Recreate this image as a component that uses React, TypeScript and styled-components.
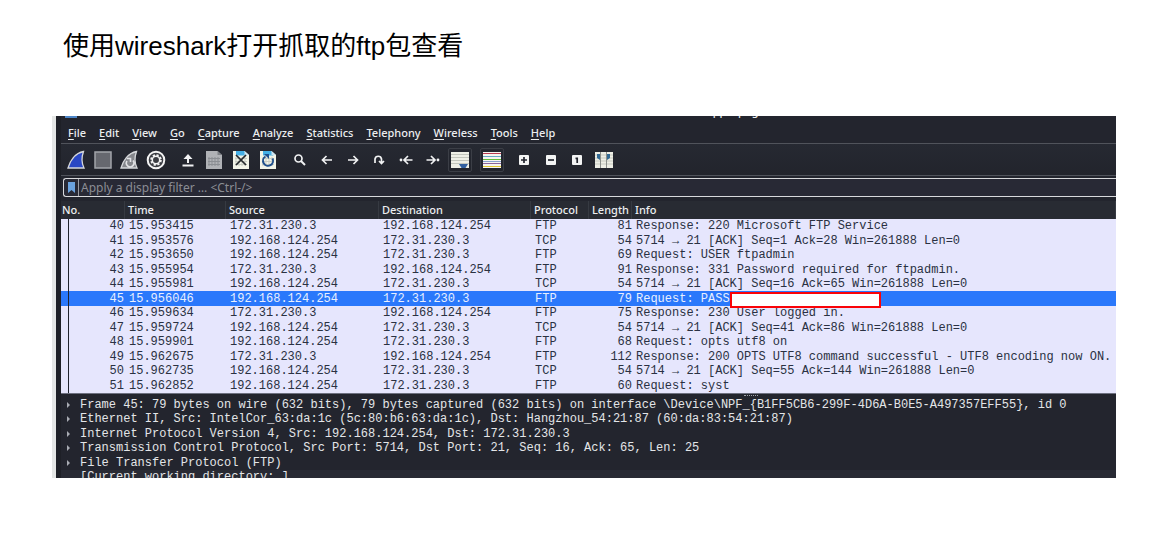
import React from 'react';
import styled, { createGlobalStyle, css } from 'styled-components';

const Global = createGlobalStyle`
  * { box-sizing: border-box; }
  body { margin: 0; background: #fff; }
`;

const ui = '"Noto Sans", "Liberation Sans", sans-serif';
const mono = '"Liberation Mono", monospace';

const Slide = styled.main`
  padding: 29px 51px 0 52px;
`;

const Title = styled.h1`
  margin: 0 0 53px 11px;
  font: 400 26px/34px "Liberation Sans", "Noto Sans CJK SC", sans-serif;
  color: #000;
`;

const Capture = styled.section`
  border-left: 4px solid #e4e6e5;
  overflow: hidden;
`;

const Window = styled.div`
  background: #23252e;
  border-left: 5px solid #1e2027;
  color: #eceef0;
  font: 500 11px/16px ${ui};
`;

const TitleBar = styled.div`
  position: relative;
  display: flex;
  height: 8px;
  overflow: hidden;
`;

const AppIcon = styled.span`
  width: 12px;
  height: 2px;
  margin-left: 4px;
  background: #4d86c8;
`;

const WindowName = styled.span`
  position: absolute;
  left: 61%;
  bottom: 5px;
  line-height: 16px;
`;

const MenuBar = styled.nav`
  display: flex;
  align-items: flex-start;
  gap: 13px;
  height: 19px;
  padding-left: 7px;
`;

const MenuButton = styled.button`
  padding: 0;
  border: 0;
  background: none;
  color: inherit;
  font: 500 11px/18px ${ui};
  white-space: nowrap;
  &::first-letter { text-decoration: underline; text-underline-offset: 2px; }
`;

const Toolbar = styled.div`
  display: flex;
  align-items: center;
  height: 33px;
  padding-left: 2px;
  border-top: 1px solid #50535b;
  border-bottom: 1px solid #50535b;
  background: linear-gradient(#262932, #22242c);
`;

const Tool = styled.button<{ $gap?: number; $framed?: boolean }>`
  display: grid;
  place-items: center;
  flex: none;
  width: ${p => (p.$framed ? 24 : 26)}px;
  height: 24px;
  margin: 0 0 0 ${p => p.$gap ?? 0}px;
  padding: 0;
  border: ${p => (p.$framed ? '1px solid #3b3e46' : '0')};
  border-radius: 2px;
  background: none;
  svg { display: block; }
`;

const FilterRow = styled.label`
  display: flex;
  height: 19px;
  margin: 2px 0 4px 2px;
  border: 1px solid #d8d9dc;
  border-right: 0;
  border-radius: 3px 0 0 3px;
  background: #282935;
`;

const Bookmark = styled.button`
  display: grid;
  place-items: center;
  width: 15px;
  padding: 0;
  border: 0;
  border-right: 1px solid #9a9ca3;
  background: none;
`;

const FilterInput = styled.input`
  flex: 1;
  min-width: 0;
  padding: 0 2px;
  border: 0;
  outline: 0;
  background: none;
  color: #eceef0;
  font: 400 12px/16px ${ui};
  &::placeholder { color: #8b8d94; opacity: 1; }
`;

const Packets = styled.table`
  width: 100%;
  table-layout: fixed;
  border-collapse: collapse;
  background: #e6e6fd;
  color: #2a3142;
  font: 400 12px/14px ${mono};
`;

const Head = styled.th<{ $w?: number }>`
  width: ${p => (p.$w ? `${p.$w}px` : 'auto')};
  height: 18px;
  padding: 0 0 0 3px;
  background: #282b33;
  box-shadow: inset -1px 0 #363a42;
  color: #eceef0;
  font: 500 11px/16px ${ui};
  text-align: left;
  vertical-align: middle;
  &:first-child { padding-left: 1px; }
`;

const Row = styled.tr<{ $selected?: boolean }>`
  height: 14px;
  &:nth-child(even) { height: 15px; }
  ${p => p.$selected && css`background: #2a78fb; color: #e8efff;`}
`;

const Cell = styled.td<{ $right?: boolean }>`
  padding: 0 0 0 4px;
  text-align: ${p => (p.$right ? 'right' : 'left')};
  white-space: pre;
  &:first-child {
    padding: 0 1px 0 0;
    background: linear-gradient(#1f232d, #1f232d) 7px 0 / 1px 100% no-repeat;
  }
`;

const InfoLine = styled.div`
  display: flex;
  height: 14px;
`;

const Redaction = styled.span`
  position: relative;
  flex: none;
  width: 151px;
  height: 16px;
  border: 2px solid #fa0308;
  background: #fff;
`;

const Splitter = styled.div`
  display: flex;
  justify-content: center;
  height: 4px;
  padding: 1px 0 0 325px;
  border-top: 1px solid #6d7080;
  &::after { content: ''; width: 14px; border-top: 1px dotted #a0a3ab; }
`;

const Details = styled.ul`
  height: 81px;
  margin: 0;
  padding: 0;
  overflow: hidden;
  list-style: none;
  color: #e3e5e8;
  font: 400 12px/14px ${mono};
`;

const Detail = styled.li`
  display: flex;
  align-items: center;
  height: 15px;
  padding-left: 6px;
  white-space: pre;
  &:nth-child(even) { height: 14px; }
  &:last-child { background: #282a34; }
`;

const Arrow = styled.span<{ $leaf?: boolean }>`
  width: 13px;
  visibility: ${p => (p.$leaf ? 'hidden' : 'visible')};
  &::before {
    content: '';
    display: block;
    width: 0;
    border: 3px solid transparent;
    border-left-color: #a9acb3;
    border-right: 0;
  }
`;

const menus = ['File', 'Edit', 'View', 'Go', 'Capture', 'Analyze', 'Statistics', 'Telephony', 'Wireless', 'Tools', 'Help'];

const a = '192.168.124.254';
const b = '172.31.230.3';
const packets: [number, string, boolean, string, number, string][] = [
  [40, '15.953415', false, 'FTP', 81, 'Response: 220 Microsoft FTP Service'],
  [41, '15.953576', true, 'TCP', 54, '5714 → 21 [ACK] Seq=1 Ack=28 Win=261888 Len=0'],
  [42, '15.953650', true, 'FTP', 69, 'Request: USER ftpadmin'],
  [43, '15.955954', false, 'FTP', 91, 'Response: 331 Password required for ftpadmin.'],
  [44, '15.955981', true, 'TCP', 54, '5714 → 21 [ACK] Seq=16 Ack=65 Win=261888 Len=0'],
  [45, '15.956046', true, 'FTP', 79, 'Request: PASS'],
  [46, '15.959634', false, 'FTP', 75, 'Response: 230 User logged in.'],
  [47, '15.959724', true, 'TCP', 54, '5714 → 21 [ACK] Seq=41 Ack=86 Win=261888 Len=0'],
  [48, '15.959901', true, 'FTP', 68, 'Request: opts utf8 on'],
  [49, '15.962675', false, 'FTP', 112, 'Response: 200 OPTS UTF8 command successful - UTF8 encoding now ON.'],
  [50, '15.962735', true, 'TCP', 54, '5714 → 21 [ACK] Seq=55 Ack=144 Win=261888 Len=0'],
  [51, '15.962852', true, 'FTP', 60, 'Request: syst'],
];

const details = [
  'Frame 45: 79 bytes on wire (632 bits), 79 bytes captured (632 bits) on interface \\Device\\NPF_{B1FF5CB6-299F-4D6A-B0E5-A497357EFF55}, id 0',
  'Ethernet II, Src: IntelCor_63:da:1c (5c:80:b6:63:da:1c), Dst: Hangzhou_54:21:87 (60:da:83:54:21:87)',
  'Internet Protocol Version 4, Src: 192.168.124.254, Dst: 172.31.230.3',
  'Transmission Control Protocol, Src Port: 5714, Dst Port: 21, Seq: 16, Ack: 65, Len: 25',
  'File Transfer Protocol (FTP)',
];

const Icon = ({ children }: { children: React.ReactNode }) => (
  <svg width="20" height="20" viewBox="0 0 20 20" fill="none" aria-hidden="true">{children}</svg>
);

const line = { stroke: '#f1f2f3', strokeWidth: 1.7 };

const Fin = ({ fill }: { fill: string }) => (
  <path d="M2 18C4 11 9 3 17.500 1.500C15.500 7 15.500 13 18 18Z" fill={fill} stroke="#d5d7da" strokeWidth="1.300" />
);

const Sheet = ({ dim }: { dim?: boolean }) => (
  <>
    <path d="M2 1H13.500L18 5V19H2Z" fill={dim ? '#b0b2b6' : '#f2f4e8'} />
    {!dim && <path d="M5 1H13.500L15.500 5.500H5Z" fill="#45b0e6" />}
    <path d="M13.500 1V5H18Z" fill={dim ? '#7e8186' : '#cfe6f2'} />
    <path d="M5 7V16M8 7V16M11 7V16M14 7V16M4 8.500H16M4 11.500H16M4 14.500H16" stroke={dim ? '#8b8e93' : '#c9cdc3'} strokeWidth="1" />
  </>
);

const Box = ({ children }: { children: React.ReactNode }) => (
  <Icon>
    <rect x="5" y="5" width="10" height="10" rx="1" fill="#f3f4f4" />
    <g stroke="#23252e" strokeWidth="1.700">{children}</g>
  </Icon>
);

const tools: { name: string; gap?: number; framed?: boolean; icon: React.ReactNode }[] = [
  { name: 'Start', icon: <Icon><Fin fill="#2947c4" /></Icon> },
  { name: 'Stop', gap: 1, icon: <Icon><rect x="2" y="2" width="16" height="16" fill="#66686f" stroke="#a3a5aa" strokeWidth="1.500" /></Icon> },
  { name: 'Restart', icon: <Icon><Fin fill="#85878c" /><path d="M8 11A3.800 3.800 0 1 0 14 10.500M8 8.500H11.500V12" stroke="#e2e3e6" strokeWidth="1.600" /></Icon> },
  { name: 'Options', gap: 1, icon: <Icon><circle cx="10" cy="10" r="8.300" fill="#3a3c42" stroke="#f4f4f4" strokeWidth="2" /><circle cx="10" cy="10" r="4.900" stroke="#f4f4f4" strokeWidth="1.800" strokeDasharray="2.200 1.640" /><circle cx="10" cy="10" r="3.700" stroke="#f4f4f4" strokeWidth="1.500" /></Icon> },
  { name: 'Open', gap: 6, icon: <Icon><path d="M10 13V7M4.500 15.500H15.500" {...line} strokeWidth={2} /><path d="M5.500 9L10 4L14.500 9Z" fill="#f1f2f3" /></Icon> },
  { name: 'Save', icon: <Icon><Sheet dim /></Icon> },
  { name: 'Close', gap: 1, icon: <Icon><Sheet /><path d="M5 5L15 15M15 5L5 15" stroke="#25282c" strokeWidth="1.700" /></Icon> },
  { name: 'Reload', gap: 1, icon: <Icon><Sheet /><path d="M14.500 8.500A5 5 0 1 1 7.500 6.500" stroke="#1f4f8c" strokeWidth="2" /><path d="M6 4H11V9Z" fill="#1f4f8c" /></Icon> },
  { name: 'Find', gap: 6, icon: <Icon><circle cx="8.500" cy="8.500" r="3.500" {...line} /><path d="M11 11L15 15" {...line} strokeWidth={2} /></Icon> },
  { name: 'Back', gap: 1, icon: <Icon><path d="M15 10H6M9.500 6L5.500 10L9.500 14" {...line} /></Icon> },
  { name: 'Forward', icon: <Icon><path d="M5 10H14M10.500 6L14.500 10L10.500 14" {...line} /></Icon> },
  { name: 'Go to packet', icon: <Icon><path d="M6 13V9A3.300 3.300 0 0 1 12.500 9V13M10 11L12.500 13.500L15 11" {...line} /></Icon> },
  { name: 'First packet', gap: 1, icon: <Icon><path d="M16.500 10H9M12 6L8 10L12 14" {...line} /><circle cx="5" cy="10" r="1.400" fill="#f1f2f3" /></Icon> },
  { name: 'Last packet', gap: 1, icon: <Icon><path d="M3.500 10H11M8 6L12 10L8 14" {...line} /><circle cx="15" cy="10" r="1.400" fill="#f1f2f3" /></Icon> },
  { name: 'Auto scroll', gap: 2, framed: true, icon: <Icon><path d="M1 2H19V18H1Z" fill="#eeefe6" /><path d="M1 4.500H19M1 7.500H19M1 10.500H19M1 13.500H19" stroke="#c3c6bd" /><path d="M9 14H18L15.500 18H11.500Z" fill="#315f9f" /></Icon> },
  { name: 'Colorize', gap: 8, framed: true, icon: <Icon><path d="M1 2H19V18H1Z" fill="#f6f5f1" /><path d="M1 3.500H19" stroke="#b83b52" /><path d="M1 6.500H19" stroke="#66a9c7" /><path d="M1 9.500H19" stroke="#62bd3b" /><path d="M1 11.500H19" stroke="#8aa1cf" /><path d="M1 13.500H19" stroke="#8c6699" /><path d="M1 16.500H19" stroke="#dfc72f" /></Icon> },
  { name: 'Zoom in', gap: 7, icon: <Box><path d="M7 10H13M10 7V13" /></Box> },
  { name: 'Zoom out', gap: 1, icon: <Box><path d="M7 10H13" /></Box> },
  { name: 'Normal size', icon: <Box><path d="M8.500 8.300H10.200V13" /></Box> },
  { name: 'Resize columns', gap: 1, icon: <Icon><path d="M1 2H19V18H1Z" fill="#eeefe6" /><path d="M1 5H19M1 8H19M1 11H19M1 14H19" stroke="#c6c9c0" /><path d="M6.500 2V18M12.500 2V18" stroke="#8b8f8b" /><path d="M3 4H6V10L3 8ZM13 4H16V8L13 10Z" fill="#336a94" /></Icon> },
];

const columns: [string, number?][] = [['No.', 64], ['Time', 101], ['Source', 153], ['Destination', 152], ['Protocol', 58], ['Length', 43], ['Info']];

export default function App() {
  return (
    <>
      <Global />
      <Slide>
        <Title>使用wireshark打开抓取的ftp包查看</Title>
        <Capture>
          <Window>
            <TitleBar><AppIcon /><WindowName>ftppcapng</WindowName></TitleBar>
            <MenuBar>{menus.map(m => <MenuButton key={m}>{m}</MenuButton>)}</MenuBar>
            <Toolbar>
              {tools.map(t => (
                <Tool key={t.name} aria-label={t.name} $gap={t.gap} $framed={t.framed}>{t.icon}</Tool>
              ))}
            </Toolbar>
            <FilterRow>
              <Bookmark aria-label="Bookmarks">
                <svg width="7" height="11" viewBox="0 0 7 11"><path d="M0 0H7V11L3.500 8L0 11Z" fill="#6ba3df" /></svg>
              </Bookmark>
              <FilterInput aria-label="Display filter" placeholder="Apply a display filter … <Ctrl-/>" />
            </FilterRow>
            <Packets>
              <thead>
                <tr>{columns.map(([name, w]) => <Head key={name} $w={w}>{name}</Head>)}</tr>
              </thead>
              <tbody>
                {packets.map(([no, time, out, protocol, length, info]) => (
                  <Row key={no} $selected={no === 45}>
                    <Cell $right>{no}</Cell>
                    <Cell>{time}</Cell>
                    <Cell>{out ? a : b}</Cell>
                    <Cell>{out ? b : a}</Cell>
                    <Cell>{protocol}</Cell>
                    <Cell $right>{length}</Cell>
                    <Cell><InfoLine>{info}{no === 45 && <Redaction />}</InfoLine></Cell>
                  </Row>
                ))}
              </tbody>
            </Packets>
            <Splitter />
            <Details>
              {details.map(d => <Detail key={d}><Arrow />{d}</Detail>)}
              <Detail><Arrow $leaf />[Current working directory: ]</Detail>
            </Details>
          </Window>
        </Capture>
      </Slide>
    </>
  );
}
